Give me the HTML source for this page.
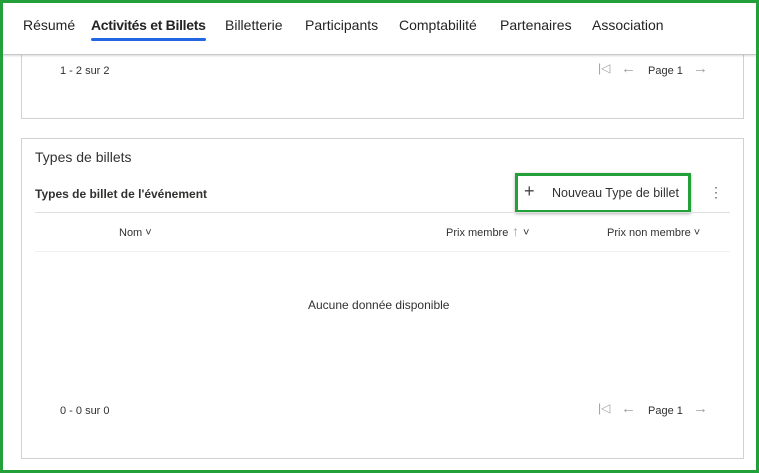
<!DOCTYPE html>
<html><head><meta charset="utf-8"><style>
*{margin:0;padding:0;box-sizing:border-box}
body{width:759px;height:473px;position:relative;overflow:hidden;background:#fff;font-family:"Liberation Sans",sans-serif;color:#323130}
.frame{position:absolute;left:0;top:0;width:759px;height:473px;border:3px solid #23a03a;z-index:10;pointer-events:none}
.hdr{position:absolute;left:0;top:0;width:759px;height:55px;background:#fff;border-bottom:1px solid #c8c8c8;box-shadow:0 1px 2px rgba(0,0,0,.15);z-index:5}
.tab{position:absolute;top:17px;font-size:14px;color:#242424}
.card{position:absolute;left:21px;width:723px;border:1px solid #d1d1d1;background:#fff}
.s{position:absolute;font-size:11px;color:#323130;line-height:13px;white-space:nowrap}
.g{position:absolute;color:#a0a0a0;font-size:15px}
</style></head><body>
<div class="hdr">
<span class="tab" style="left:23px">Résumé</span>
<span class="tab" style="left:91px;font-weight:bold;letter-spacing:-0.3px">Activités et Billets</span>
<div style="position:absolute;left:91px;top:38px;width:115px;height:3px;background:#2266e3;border-radius:2px"></div>
<span class="tab" style="left:225px">Billetterie</span>
<span class="tab" style="left:305px">Participants</span>
<span class="tab" style="left:399px">Comptabilité</span>
<span class="tab" style="left:500px">Partenaires</span>
<span class="tab" style="left:592px">Association</span>
</div>
<div class="card" style="top:40px;height:79px"></div>
<span class="s" style="left:60px;top:65px">1 - 2 sur 2</span>
<span class="g" style="left:598px;top:61px;font-size:12px">|◁</span>
<span class="g" style="left:621px;top:60px">←</span>
<span class="s" style="left:648px;top:65px">Page 1</span>
<span class="g" style="left:693px;top:60px">→</span>

<div class="card" style="top:138px;height:321px"></div>
<span style="position:absolute;left:35px;top:149px;font-size:14px;color:#323130">Types de billets</span>
<span style="position:absolute;left:35px;top:187px;font-size:12px;font-weight:bold">Types de billet de l'événement</span>
<div style="position:absolute;left:515px;top:173px;width:176px;height:40px;border:3px solid #23a03a;box-shadow:0 1px 3px rgba(0,0,0,.3)"></div>
<span style="position:absolute;left:524px;top:181px;font-size:18px;font-weight:300;color:#444">+</span>
<span style="position:absolute;left:552px;top:186px;font-size:12.5px">Nouveau Type de billet</span>
<span style="position:absolute;left:709px;top:184px;font-size:14px;color:#666">⋮</span>
<div style="position:absolute;left:35px;top:212px;width:695px;height:1px;background:#e0e0e0"></div>
<span class="s" style="left:119px;top:227px">Nom ˅</span>
<span class="s" style="left:446px;top:227px">Prix membre</span>
<span class="g" style="left:512px;top:223px;font-size:14px">↑</span>
<span class="s" style="left:523px;top:227px">˅</span>
<span class="s" style="left:607px;top:227px">Prix non membre ˅</span>
<div style="position:absolute;left:35px;top:251px;width:695px;height:1px;background:#f0f0f0"></div>
<span style="position:absolute;left:308px;top:298px;font-size:12px">Aucune donnée disponible</span>
<span class="s" style="left:60px;top:405px">0 - 0 sur 0</span>
<span class="g" style="left:598px;top:401px;font-size:12px">|◁</span>
<span class="g" style="left:621px;top:400px">←</span>
<span class="s" style="left:648px;top:405px">Page 1</span>
<span class="g" style="left:693px;top:400px">→</span>
<div class="frame"></div>
</body></html>
